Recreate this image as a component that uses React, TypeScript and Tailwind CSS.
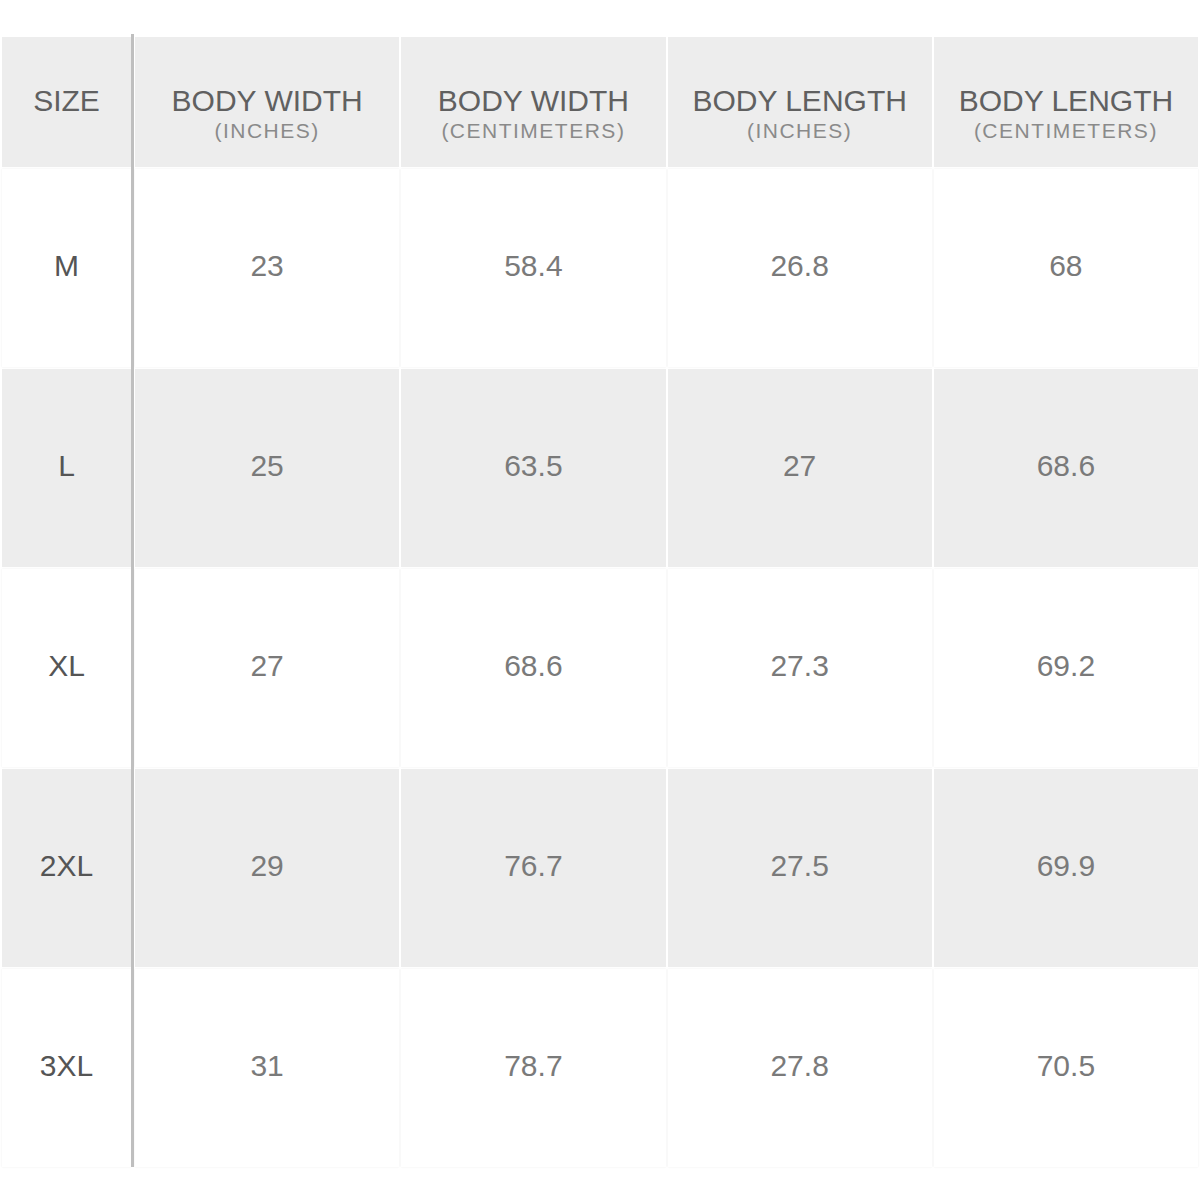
import React from "react";

const rows = [
  { size: "M", v: ["23", "58.4", "26.8", "68"] },
  { size: "L", v: ["25", "63.5", "27", "68.6"] },
  { size: "XL", v: ["27", "68.6", "27.3", "69.2"] },
  { size: "2XL", v: ["29", "76.7", "27.5", "69.9"] },
  { size: "3XL", v: ["31", "78.7", "27.8", "70.5"] },
];

const headers = [
  ["BODY WIDTH", "(INCHES)"],
  ["BODY WIDTH", "(CENTIMETERS)"],
  ["BODY LENGTH", "(INCHES)"],
  ["BODY LENGTH", "(CENTIMETERS)"],
];

const font = { fontFamily: '"Liberation Sans", Arial, sans-serif' };

export default function App() {
  return (
    <div className="w-[1200px] h-[1200px] bg-white" style={font}>
      <div className="flex pt-[34px] pl-[2px] pr-[2px]">
        {/* Size column */}
        <div className="w-[129px] flex flex-col gap-[2px] mt-[3px]">
          <div className="h-[130px] bg-[#ededed] flex justify-center pt-[49px]">
            <div className="text-[30px] leading-[30px] text-[#606060]">SIZE</div>
          </div>
          {rows.map((r, i) => (
            <div
              key={r.size}
              className={
                "h-[198px] flex items-center justify-center pb-[5px] " +
                (i % 2 === 1
                  ? "bg-[#ededed]"
                  : "bg-white shadow-[0_0_2px_rgba(0,0,0,0.07)]")
              }
            >
              <span className="text-[30px] leading-[30px] text-[#555555]">{r.size}</span>
            </div>
          ))}
        </div>
        {/* Divider */}
        <div className="w-[3px] bg-[#bfbfbf] mr-[1px]" />
        {/* Data columns */}
        <div className="flex-1 grid grid-cols-4 gap-[2px] mt-[3px]">
          {headers.map((h, i) => (
            <div
              key={"h" + i}
              className="h-[130px] bg-[#ededed] flex flex-col items-center pt-[49px]"
            >
              <div className="text-[30px] leading-[30px] text-[#606060]">{h[0]}</div>
              <div className="text-[21px] leading-[24px] tracking-[1.5px] text-[#8a8a8a] mt-[3px]">
                {h[1]}
              </div>
            </div>
          ))}
          {rows.map((r, i) =>
            r.v.map((val, j) => (
              <div
                key={r.size + j}
                className={
                  "h-[198px] flex items-center justify-center pb-[5px] " +
                  (i % 2 === 1
                    ? "bg-[#ededed]"
                    : "bg-white shadow-[0_0_2px_rgba(0,0,0,0.07)]")
                }
              >
                <span className="text-[30px] leading-[30px] text-[#7a7a7a]">{val}</span>
              </div>
            ))
          )}
        </div>
      </div>
    </div>
  );
}
